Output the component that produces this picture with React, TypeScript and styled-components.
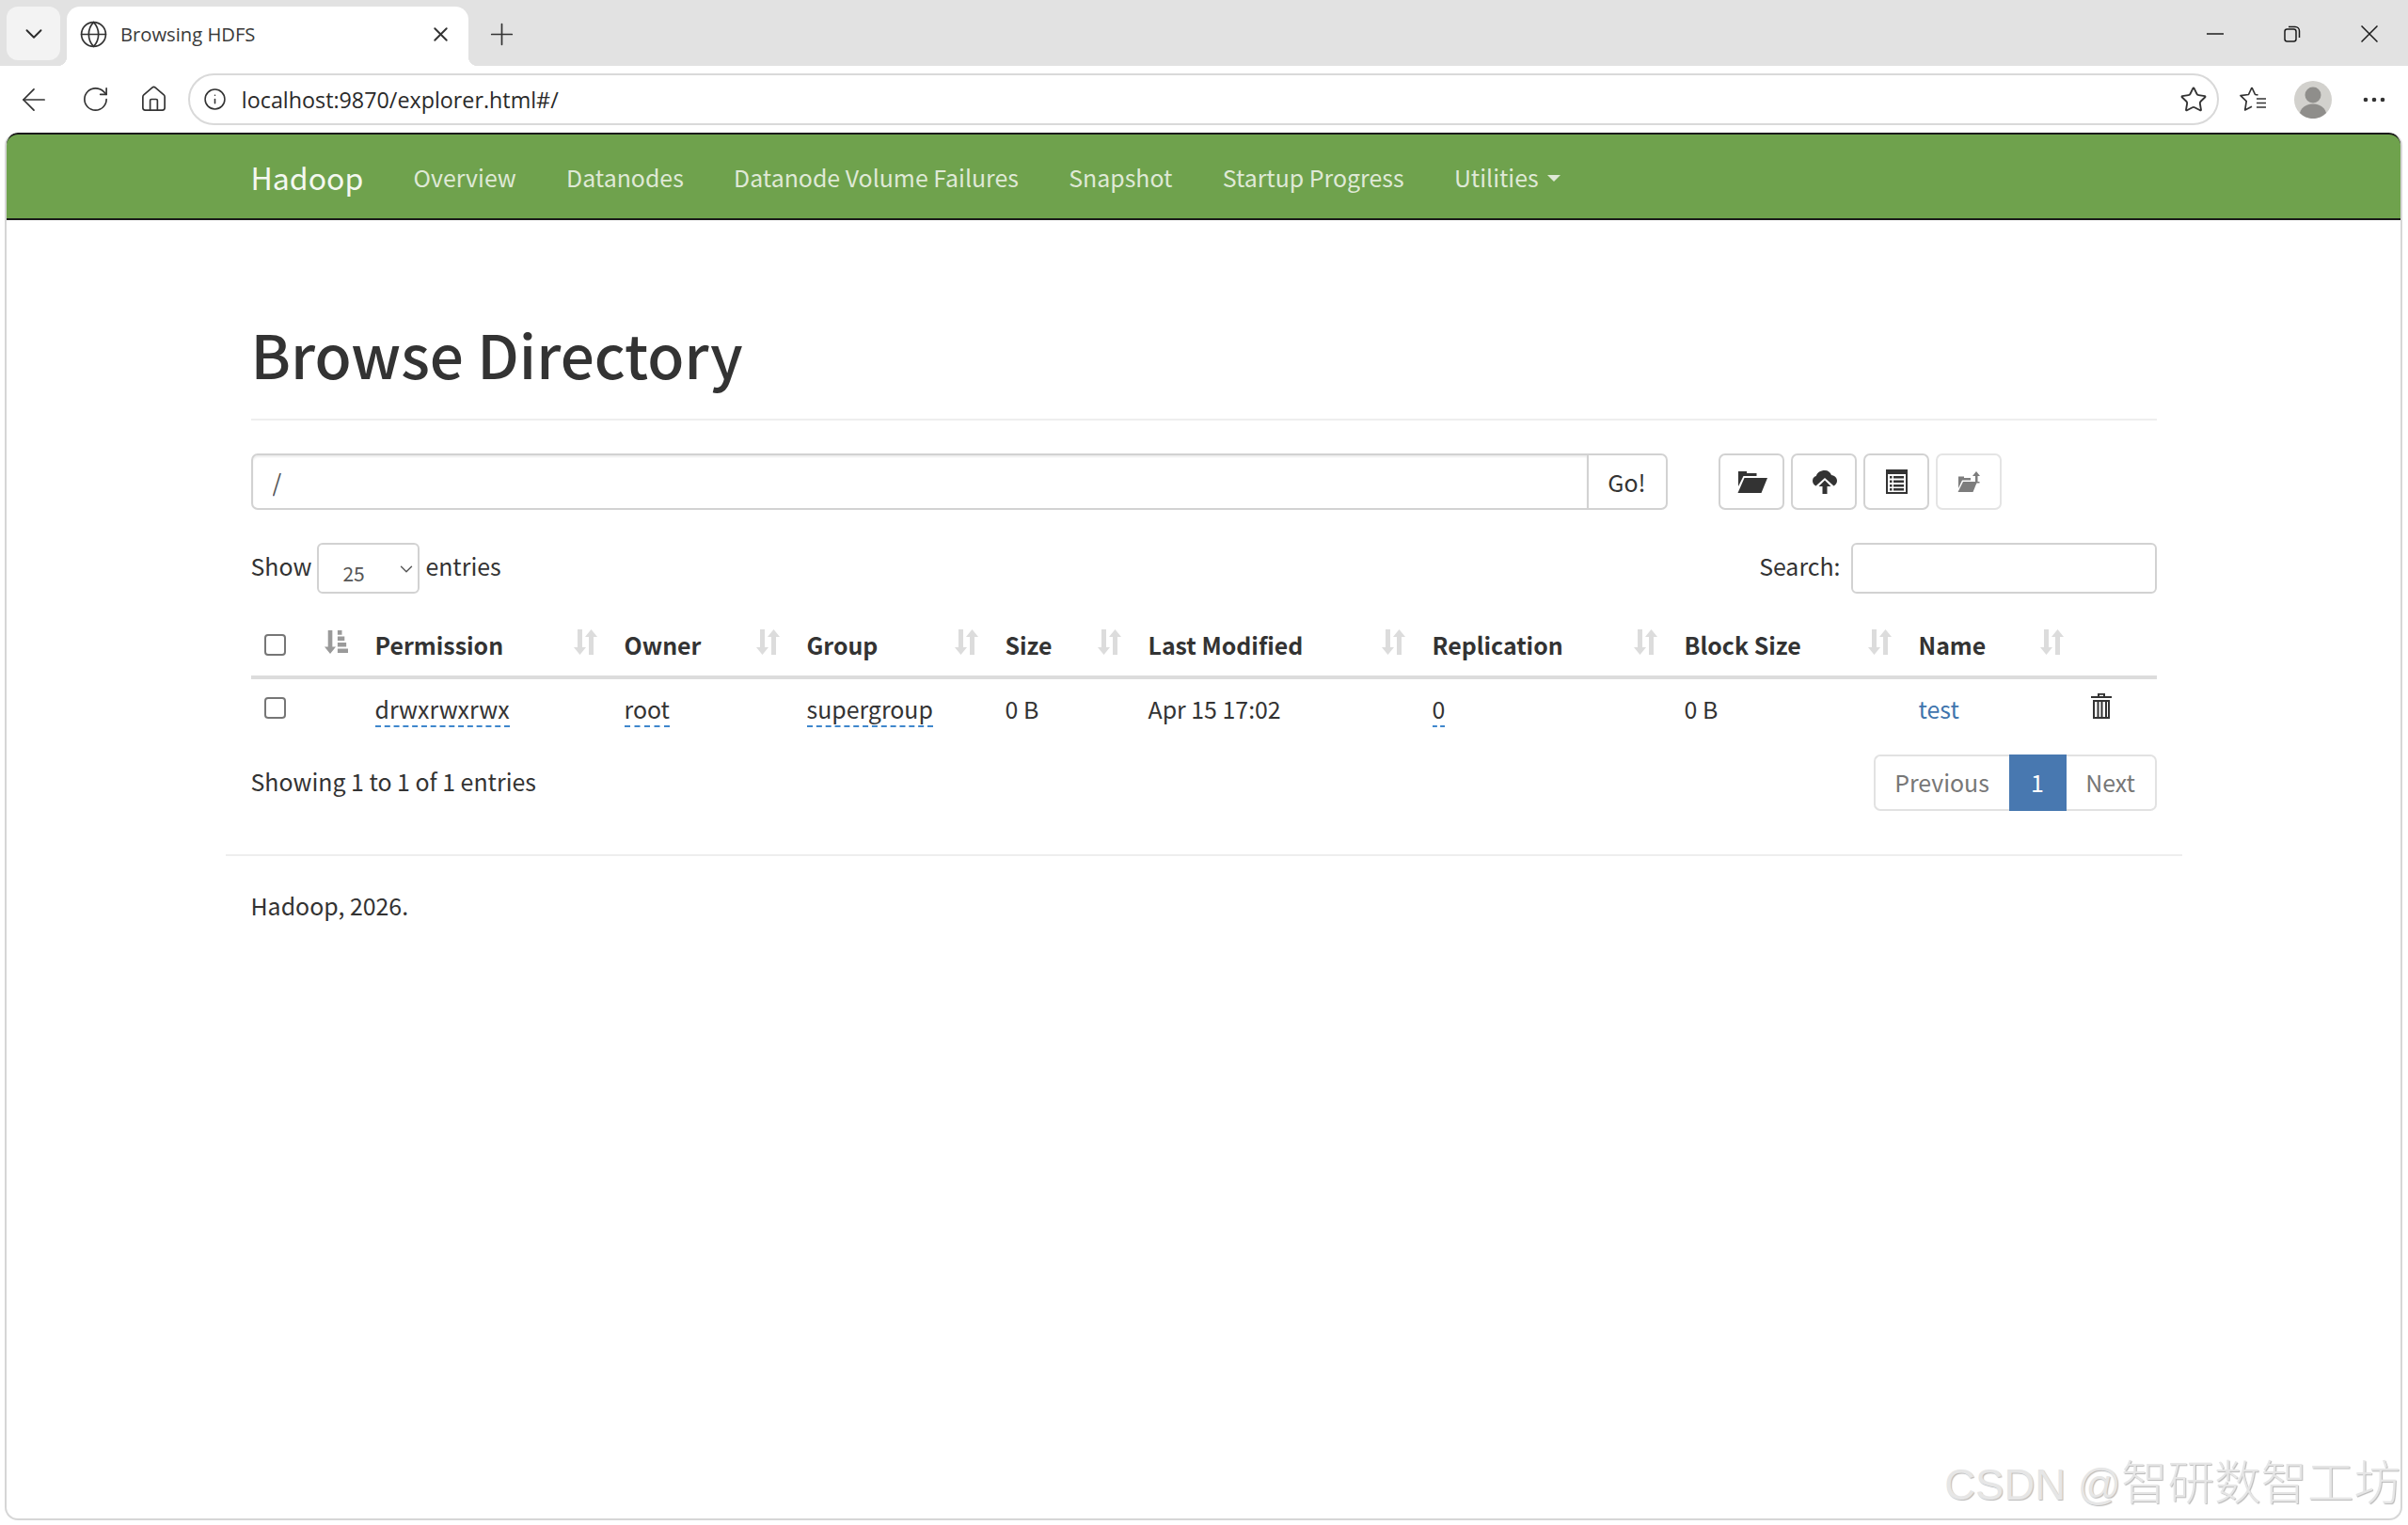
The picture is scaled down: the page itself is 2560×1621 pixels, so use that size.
import React from "react";
import styled, { createGlobalStyle } from "styled-components";
import { ChevronDown, Globe, X, Plus, ArrowLeft, RotateCw, House, Info, Star } from "lucide-react";

const Global = createGlobalStyle`
  html, body { margin: 0; padding: 0; background: #fff; }
  body { font-family: "Noto Sans CJK SC", "Noto Sans", sans-serif; font-size: 24.9px; color: #333; overflow: hidden; }
  * { box-sizing: border-box; }
`;

const Shell = styled.div`
  width: 2560px;
  height: 1621px;
  display: flex;
  flex-direction: column;
  background: #fff;
`;

const TabStrip = styled.div`
  height: 70px;
  background: #e2e2e2;
  display: flex;
  align-items: flex-start;
  padding: 7px 0 0 7px;
`;

const TabMenu = styled.button`
  width: 57px;
  height: 57px;
  background: #f3f3f3;
  border: 0;
  border-radius: 12px;
  display: flex;
  align-items: center;
  justify-content: center;
  color: #2b2b2b;
  padding: 0;
`;

const Tab = styled.div`
  position: relative;
  margin-left: 7px;
  width: 427px;
  height: 63px;
  background: #fff;
  border-radius: 14px 14px 0 0;
  display: flex;
  align-items: center;
  padding: 0 17px 5px 13px;
  color: #333;
  &::before, &::after {
    content: "";
    position: absolute;
    bottom: 0;
    width: 10px;
    height: 10px;
  }
  &::before { left: -10px; background: radial-gradient(circle at 0 0, #e2e2e2 10px, #fff 10.5px); }
  &::after { right: -10px; background: radial-gradient(circle at 100% 0, #e2e2e2 10px, #fff 10.5px); }
`;

const TabTitle = styled.span`
  flex: 1;
  margin-left: 13px;
  font-family: "Open Sans", "Noto Sans", sans-serif;
  font-size: 20.2px;
  color: #3a3a3a;
`;

const NewTab = styled.div`
  margin-left: 17px;
  height: 58px;
  display: flex;
  align-items: center;
  color: #333;
`;

const WindowControls = styled.div`
  margin-left: auto;
  height: 58px;
  display: flex;
  align-items: center;
  color: #1c1c1c;
  padding-right: 32px;
  gap: 64px;
`;

const Toolbar = styled.div`
  height: 71px;
  display: flex;
  align-items: center;
  background: #fff;
  padding: 0 24px 0 17px;
  color: #333;
`;

const NavIcons = styled.div`
  display: flex;
  align-items: center;
  gap: 31px;
  width: 183px;
`;

const AddressBar = styled.div`
  width: 2161px;
  height: 55px;
  border: 2.5px solid #d9d9d9;
  border-radius: 28px;
  display: flex;
  align-items: center;
  padding: 0 10px 0 14px;
`;

const Url = styled.span`
  flex: 1;
  margin-left: 16px;
  font-family: "Open Sans", "Noto Sans", sans-serif;
  font-size: 23.3px;
  color: #2a2a2a;
`;

const ToolIcons = styled.div`
  display: flex;
  align-items: center;
  margin-left: 21px;
  gap: 29px;
  color: #333;
`;

const Avatar = styled.svg`
  width: 40px;
  height: 40px;
  display: block;
`;

const PageFrame = styled.div`
  position: relative;
  width: 2549px;
  height: 1475px;
  margin-left: 5px;
  border: 2px solid #d6d6d6;
  border-top: 0;
  border-radius: 14px 14px 14px 14px;
  overflow: hidden;
`;

const Navbar = styled.nav`
  height: 93px;
  margin: 0 -2px;
  background: #6fa24d;
  border: 2.5px solid #1a1a1a;
  border-radius: 14px 14px 0 0;
`;

const NavInner = styled.div`
  width: 2080px;
  margin: 0 auto;
  padding: 0 27px;
  height: 100%;
  display: flex;
  align-items: center;
  gap: 53.3px;
`;

const Brand = styled.a`
  font-size: 32px;
  color: #f4f8f0;
`;

const NavLink = styled.a`
  font-size: 24.9px;
  color: #dfe9d6;
  display: inline-flex;
  align-items: center;
`;

const Caret = styled.span`
  display: inline-block;
  margin-left: 9px;
  margin-top: 4px;
  border-top: 7px solid #dfe9d6;
  border-left: 7px solid transparent;
  border-right: 7px solid transparent;
`;

const Main = styled.main`
  width: 2080px;
  margin: 0 auto;
  padding: 0 27px;
`;

const Title = styled.h1`
  margin: 106px 0 0;
  padding-bottom: 35px;
  font-size: 63.8px;
  line-height: 70px;
  font-weight: 500;
  color: #333;
  border-bottom: 2px solid #eee;
`;

const PathRow = styled.div`
  display: flex;
  align-items: stretch;
  height: 60px;
  margin-top: 35px;
`;

const PathInput = styled.input`
  width: 1422px;
  height: 60px;
  border: 2.5px solid #d2d2d2;
  border-radius: 7px 0 0 7px;
  padding: 0 21px;
  font: inherit;
  color: #555;
  box-shadow: inset 0 2px 2px rgba(0, 0, 0, 0.07);
  outline: none;
`;

const GoButton = styled.button`
  width: 84px;
  height: 60px;
  border: 2.5px solid #d2d2d2;
  border-left: 0;
  border-radius: 0 7px 7px 0;
  background: #fff;
  font: inherit;
  color: #333;
  padding: 0;
`;

const ActionGroup = styled.div`
  display: flex;
  gap: 7px;
  margin-left: 54px;
`;

const ActionButton = styled.button<{ $off?: boolean }>`
  width: 70px;
  height: 60px;
  border: 2.5px solid ${(p) => (p.$off ? "#e4e4e4" : "#d2d2d2")};
  border-radius: 7px;
  background: #fff;
  color: ${(p) => (p.$off ? "#7d7d7d" : "#333")};
  display: flex;
  align-items: center;
  justify-content: center;
  padding: 0 0 0 2px;
`;

const ControlsRow = styled.div`
  display: flex;
  align-items: center;
  justify-content: space-between;
  height: 54px;
  margin-top: 35px;
`;

const Label = styled.label`
  display: flex;
  align-items: flex-start;
  line-height: 49px;
  gap: 6px;
`;

const SelectWrap = styled.span`
  position: relative;
  display: block;
  width: 109px;
  height: 54px;
`;

const Select = styled.select`
  appearance: none;
  display: block;
  width: 100%;
  height: 100%;
  border: 2.5px solid #d2d2d2;
  border-radius: 6px;
  background: #fff;
  padding: 10px 0 0 25px;
  font-family: inherit;
  font-size: 21px;
  color: #555;
  outline: none;
`;

const SelectArrow = styled(ChevronDown)`
  position: absolute;
  right: 3px;
  top: 17px;
  color: #555;
`;

const SearchInput = styled.input`
  width: 325px;
  height: 54px;
  margin-left: 5px;
  border: 2.5px solid #d2d2d2;
  border-radius: 6px;
  outline: none;
`;

const Table = styled.table`
  width: 2026px;
  margin-top: 19px;
  border-collapse: collapse;
  table-layout: fixed;
`;

const Th = styled.th`
  height: 70px;
  padding: 0 15px 0 14px;
  border-bottom: 4px solid #dcdcdc;
  font-weight: 700;
  text-align: left;
  color: #333;
`;

const HeadCell = styled.div`
  display: flex;
  align-items: center;
  justify-content: space-between;
  padding-top: 2px;
`;

const SortSvg = styled.svg`
  width: 25px;
  height: 27px;
  margin-bottom: 5px;
  flex: none;
`;

const Td = styled.td`
  height: 63px;
  padding: 0 15px 0 14px;
  vertical-align: middle;
`;

const Editable = styled.a`
  color: #333;
  border-bottom: 2px dashed #3f87cc;
  padding-bottom: 0;
`;

const NameLink = styled.a`
  color: #3f74ad;
`;

const Check = styled.input`
  appearance: none;
  display: block;
  width: 23px;
  height: 23px;
  margin: 0;
  border: 2px solid #767676;
  border-radius: 4px;
  background: #fff;
`;

const InfoRow = styled.div`
  display: flex;
  align-items: center;
  justify-content: space-between;
  height: 60px;
  margin-top: 19px;
`;

const InfoText = styled.span`
  margin-bottom: 5px;
`;

const Pagination = styled.ul`
  display: flex;
  list-style: none;
  margin: 0;
  padding: 0;
  height: 60px;
  color: #777;
`;

const PageItem = styled.li<{ $active?: boolean; $w: number; $first?: boolean; $last?: boolean }>`
  width: ${(p) => p.$w}px;
  height: 60px;
  display: flex;
  align-items: center;
  justify-content: center;
  padding-bottom: 2px;
  background: ${(p) => (p.$active ? "#4878b0" : "#fff")};
  color: ${(p) => (p.$active ? "#fff" : "#777")};
  border: ${(p) => (p.$active ? "0" : "2px solid #e2e2e2")};
  ${(p) => (p.$first ? "border-right: 0; border-radius: 7px 0 0 7px;" : "")}
  ${(p) => (p.$last ? "border-left: 0; border-radius: 0 7px 7px 0;" : "")}
`;

const Rule = styled.hr`
  border: 0;
  border-top: 2px solid #eee;
  margin: 45.5px -27px 0;
`;

const Footer = styled.p`
  margin: 34px 0 0;
  line-height: 36px;
`;

const Watermark = styled.div`
  position: absolute;
  right: 0;
  bottom: 5px;
  font-family: "Liberation Sans", "Noto Sans CJK SC", sans-serif;
  font-size: 45.5px;
  line-height: 60px;
  white-space: nowrap;
  color: #e6e6e6;
  text-shadow: 1px 1px 1px #b9b9b9;
`;

const WatermarkCjk = styled.span`
  font-size: 49.5px;
  font-weight: 300;
`;

const Sort = () => (
  <SortSvg viewBox="0 0 25 27" fill="#dcdcdc">
    <path d="M4 0h5v19h4l-6.5 8L0 19h4z" />
    <path d="M16 27h5V8h4l-6.5-8L12 8h4z" />
  </SortSvg>
);

const SortActive = () => (
  <SortSvg viewBox="0 0 27 27" fill="#9a9a9a">
    <path d="M4 0h5v19h4l-6.5 8L0 19h4z" />
    <path d="M15 0h5v5h-5zM15 7h8v5h-8zM15 14h10v5H15zM15 21h12v5H15z" />
  </SortSvg>
);

const headers: [string, number][] = [
  ["Permission", 265],
  ["Owner", 194],
  ["Group", 211],
  ["Size", 152],
  ["Last Modified", 302],
  ["Replication", 268],
  ["Block Size", 249],
  ["Name", 183],
];

export default function App() {
  return (
    <Shell>
      <Global />
      <TabStrip>
        <TabMenu><ChevronDown size={30} strokeWidth={1.5} /></TabMenu>
        <Tab>
          <Globe size={31} strokeWidth={1.3} />
          <TabTitle>Browsing HDFS</TabTitle>
          <X size={25} strokeWidth={1.8} />
        </Tab>
        <NewTab><Plus size={37} strokeWidth={1.1} /></NewTab>
        <WindowControls>
          <svg width="18" height="18" viewBox="0 0 18 18" fill="none" stroke="currentColor" strokeWidth="1.5"><path d="M0 9h18" /></svg>
          <svg width="18" height="18" viewBox="0 0 18 18" fill="none" stroke="currentColor" strokeWidth="1.5"><rect x="1" y="4" width="12" height="13" rx="2.5" /><path d="M5 1.5h7A4.5 4.5 0 0 1 16.500 6v7" /></svg>
          <svg width="18" height="18" viewBox="0 0 18 18" fill="none" stroke="currentColor" strokeWidth="1.5"><path d="M0.500 0.500l17 17M17.500 0.500l-17 17" /></svg>
        </WindowControls>
      </TabStrip>
      <Toolbar>
        <NavIcons>
          <ArrowLeft size={38} strokeWidth={1.1} />
          <RotateCw size={31} strokeWidth={1.3} />
          <House size={31} strokeWidth={1.3} />
        </NavIcons>
        <AddressBar>
          <Info size={25} strokeWidth={1.5} />
          <Url>localhost:9870/explorer.html#/</Url>
          <Star size={30} strokeWidth={1.5} />
        </AddressBar>
        <ToolIcons>
          <svg width="30" height="30" viewBox="0 0 30 30" fill="none" stroke="currentColor" strokeWidth="1.7" strokeLinejoin="round"><path d="M14 2l3.500 7.500 3 .4M14 2l-3.500 7.500L2 10.700l6.200 6-1.500 9.300 7.300-3.800M19 14h10M19 18.500h10M19 23h10" /></svg>
          <Avatar viewBox="0 0 40 40">
            <circle cx="20" cy="20" r="20" fill="#d2d1cd" />
            <circle cx="20" cy="15" r="8.500" fill="#8f8e8b" />
            <path d="M6 34c2-7 8-9.500 14-9.500S32 27 34 34c-3.500 3.800-8.500 6-14 6S9.500 37.800 6 34z" fill="#8f8e8b" />
          </Avatar>
          <svg width="24" height="6" viewBox="0 0 24 6" fill="#333" style={{ marginLeft: 4 }}><circle cx="3" cy="3" r="2.300" /><circle cx="12" cy="3" r="2.300" /><circle cx="21" cy="3" r="2.300" /></svg>
        </ToolIcons>
      </Toolbar>
      <PageFrame>
        <Navbar>
          <NavInner>
            <Brand>Hadoop</Brand>
            <NavLink>Overview</NavLink>
            <NavLink>Datanodes</NavLink>
            <NavLink>Datanode Volume Failures</NavLink>
            <NavLink>Snapshot</NavLink>
            <NavLink>Startup Progress</NavLink>
            <NavLink>Utilities<Caret /></NavLink>
          </NavInner>
        </Navbar>
        <Main>
          <Title>Browse Directory</Title>
          <PathRow>
            <PathInput defaultValue="/" />
            <GoButton>Go!</GoButton>
            <ActionGroup>
              <ActionButton>
                <svg width="32" height="24" viewBox="0 0 32 24" fill="currentColor"><path d="M1 4V1h9v2h10.500v3H6.500L1 17zM7.500 8H32L25.500 24H0.500z" /></svg>
              </ActionButton>
              <ActionButton>
                <svg width="26" height="25" viewBox="0 0 26 25" fill="currentColor"><path d="M13 0c3.500 0 6 2 7 5 3 .2 6 2.500 6 6 0 2.500-1.500 4.500-3.500 5.500L13 8 3.500 16.500C1.200 15.500 0 13.500 0 11c0-2.500 1.500-4.500 3.800-5C4.800 2.300 8.500 0 13 0z" /><path d="M13 10.500l6.500 6.500h-4v8h-5v-8h-4z" /></svg>
              </ActionButton>
              <ActionButton>
                <svg width="23" height="26" viewBox="0 0 23 26" fill="currentColor" fillRule="evenodd"><path d="M0 0h23v26H0zM2 5v19h19V5zM4 7h2.500v2.500H4zM8 7h11v2.500H8zM4 11.500h2.500V14H4zM8 11.500h11V14H8zM4 16h2.500v2.500H4zM8 16h11v2.500H8zM4 20h2.500v2.500H4zM8 20h11v2.500H8z" /></svg>
              </ActionButton>
              <ActionButton $off>
                <svg width="25" height="22" viewBox="0 0 25 22" fill="currentColor"><path d="M1 8V5.500h6v1.500h7v2.500H5L1 18zM6 11h15l-4.500 11H0.500z" /><path d="M20 0l4 5h-2.500v6h2v1.500h-4.500V5H16z" /></svg>
              </ActionButton>
            </ActionGroup>
          </PathRow>
          <ControlsRow>
            <Label>
              Show
              <SelectWrap>
                <Select defaultValue="25"><option value="25">25</option></Select>
                <SelectArrow size={22} strokeWidth={1.5} />
              </SelectWrap>
              entries
            </Label>
            <Label>
              Search:
              <SearchInput />
            </Label>
          </ControlsRow>
          <Table>
            <colgroup>
              <col style={{ width: 118 }} />
              {headers.map(([h, w]) => <col key={h} style={{ width: w }} />)}
              <col />
            </colgroup>
            <thead>
              <tr>
                <Th><HeadCell><Check type="checkbox" /><SortActive /></HeadCell></Th>
                {headers.map(([h]) => (
                  <Th key={h}><HeadCell>{h}<Sort /></HeadCell></Th>
                ))}
                <Th />
              </tr>
            </thead>
            <tbody>
              <tr>
                <Td><Check type="checkbox" /></Td>
                <Td><Editable>drwxrwxrwx</Editable></Td>
                <Td><Editable>root</Editable></Td>
                <Td><Editable>supergroup</Editable></Td>
                <Td>0 B</Td>
                <Td>Apr 15 17:02</Td>
                <Td><Editable>0</Editable></Td>
                <Td>0 B</Td>
                <Td><NameLink>test</NameLink></Td>
                <Td>
                  <svg width="22" height="27" viewBox="0 0 22 27" fill="#333" fillRule="evenodd"><path d="M7 0h8v3h7v2H0V3h7zM9 1.800V3h4V1.800zM2 7h18v20H2zM4 9v16h2.500V9zM8.500 9v16h2V9zM12.500 9v16H15V9zM17 9v16h1V9z" /></svg>
                </Td>
              </tr>
            </tbody>
          </Table>
          <InfoRow>
            <InfoText>Showing 1 to 1 of 1 entries</InfoText>
            <Pagination>
              <PageItem $w={144} $first>Previous</PageItem>
              <PageItem $w={61} $active>1</PageItem>
              <PageItem $w={96} $last>Next</PageItem>
            </Pagination>
          </InfoRow>
          <Rule />
          <Footer>Hadoop, 2026.</Footer>
        </Main>
        <Watermark>CSDN @<WatermarkCjk>智研数智工坊</WatermarkCjk></Watermark>
      </PageFrame>
    </Shell>
  );
}
